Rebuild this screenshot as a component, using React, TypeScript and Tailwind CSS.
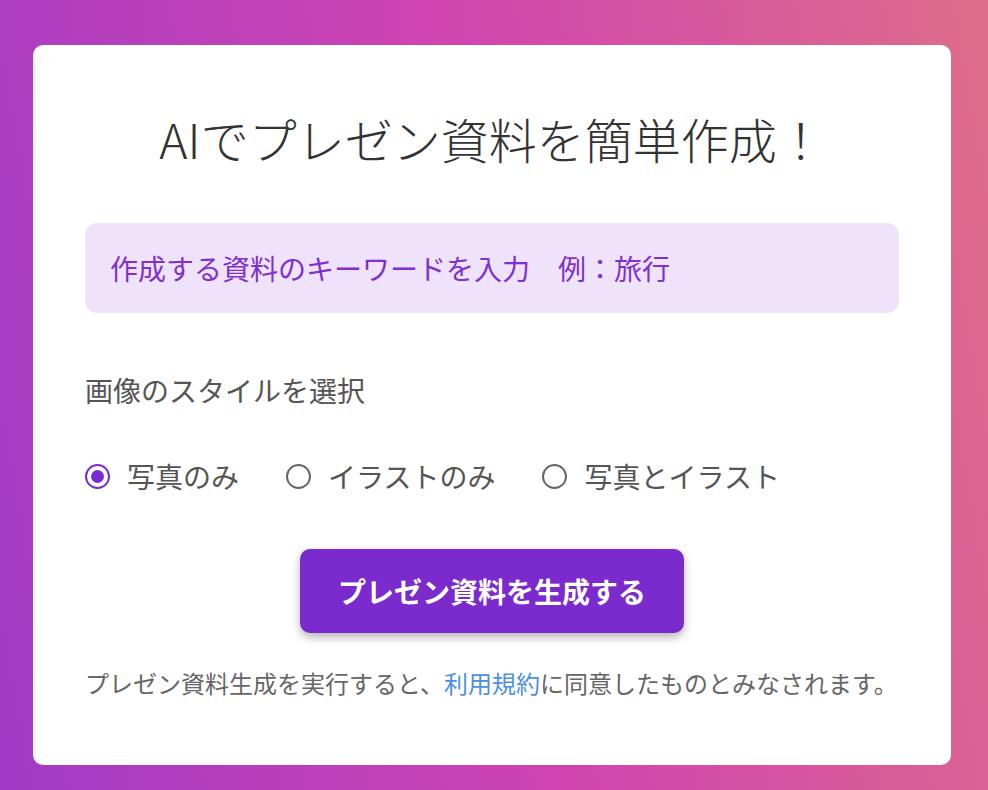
import { useState } from 'react';

const options = ['写真のみ', 'イラストのみ', '写真とイラスト'];

export default function App() {
  const [style, setStyle] = useState(0);
  const [keyword, setKeyword] = useState('');

  return (
    <div className="h-[790px] w-full overflow-hidden bg-[linear-gradient(80deg,#a23bc6_0%,#cf44b1_50%,#df6c8a_100%)] pl-[33px] pt-[45px] font-['Noto_Sans_CJK_JP','Noto_Sans',sans-serif]">
      <div className="h-[720px] w-[918px] rounded-[10px] bg-white px-[52px] pt-[57px]">
        {/* タイトル */}
        <h1 className="text-center text-[48px] font-light leading-[72px] text-[#333333]">
          AIでプレゼン資料を簡単作成！
        </h1>

        {/* キーワード入力 */}
        <input
          value={keyword}
          onChange={(e) => setKeyword(e.target.value)}
          placeholder="作成する資料のキーワードを入力　例：旅行"
          className="mt-[49px] h-[90px] w-full rounded-xl bg-[#efe2fb] px-[25px] text-[28px] text-[#7b2dcf] outline-none placeholder:text-[#7e30d0]"
        />

        <p className="mt-[57px] text-[28px] leading-[40px] text-[#555555]">画像のスタイルを選択</p>

        {/* ラジオボタン */}
        <div className="mt-[46px] flex items-center gap-[47px]">
          {options.map((label, i) => (
            <label key={label} className="flex cursor-pointer items-center gap-[17px]" onClick={() => setStyle(i)}>
              <span
                className={
                  i === style
                    ? 'flex h-[25px] w-[25px] items-center justify-center rounded-full border-2 border-[#7b2acf]'
                    : 'flex h-[25px] w-[25px] items-center justify-center rounded-full border-2 border-[#666666]'
                }
              >
                {i === style && <span className="h-[13px] w-[13px] rounded-full bg-[#7b2acf]" />}
              </span>
              <span className="text-[28px] leading-[40px] text-[#555555]">{label}</span>
            </label>
          ))}
        </div>

        {/* 生成ボタン */}
        <div className="mt-[53px] flex justify-center">
          <button className="h-[84px] rounded-[10px] bg-[#7b2acd] px-[38px] text-[28px] font-bold text-white shadow-[0_4px_10px_rgba(0,0,0,0.3)]">
            プレゼン資料を生成する
          </button>
        </div>

        <p className="mt-[32px] text-[24px] leading-[36px] text-[#666666]">
          プレゼン資料生成を実行すると、<a href="#" className="text-[#4a8fe8]">利用規約</a>に同意したものとみなされます。
        </p>
      </div>
    </div>
  );
}
